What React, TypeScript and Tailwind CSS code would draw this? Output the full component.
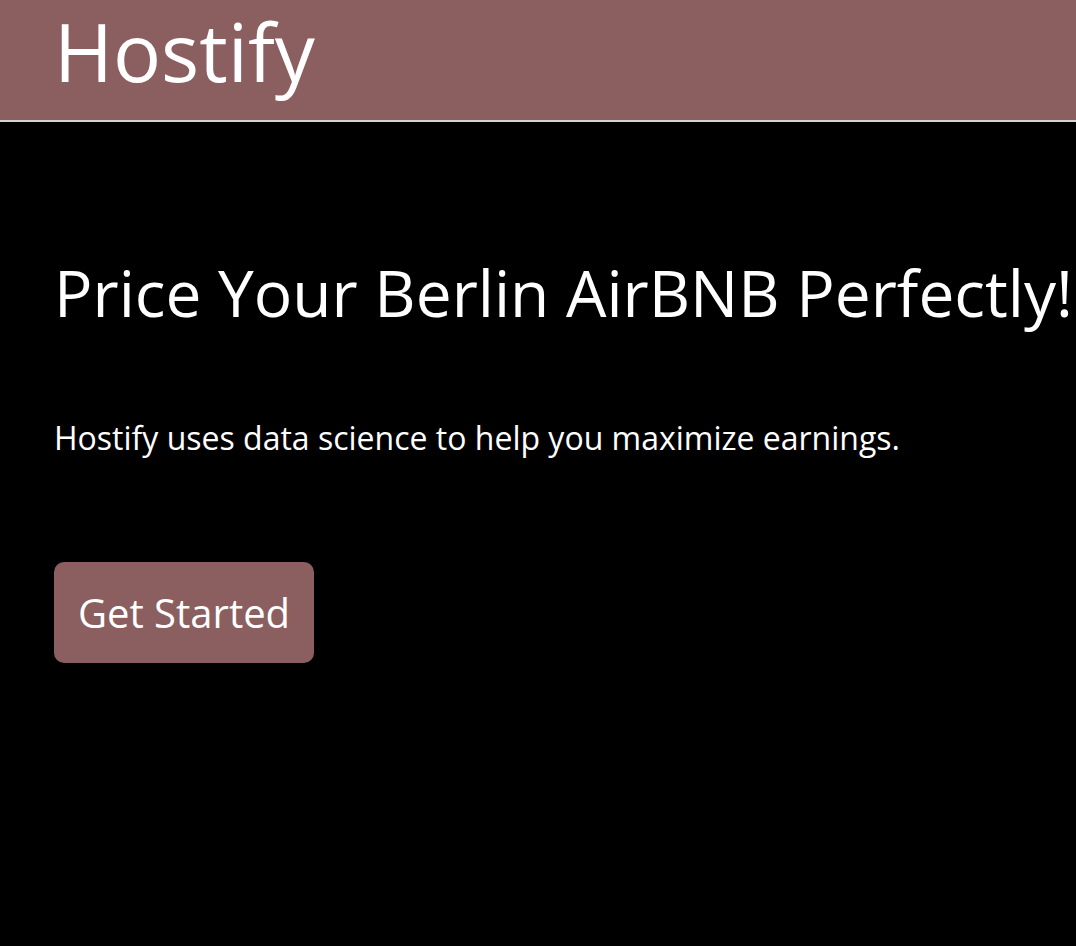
import React from 'react';

export default function App() {
  return (
    <div className="min-h-[946px] bg-black text-white font-['Open_Sans',sans-serif]">
      <header className="h-[122px] bg-[#8b5e60] border-b-2 border-[#d4d4d4] px-[54px] pt-[3px]">
        <h1 className="text-[80px] leading-[96px] font-normal">Hostify</h1>
      </header>

      <main className="px-[54px]">
        <h2 className="mt-[139px] text-[64px] leading-none whitespace-nowrap">
          Price Your Berlin AirBNB Perfectly!
        </h2>
        <p className="mt-[97px] text-[32px] leading-none">
          Hostify uses data science to help you maximize earnings.
        </p>
        <button
          type="button"
          className="mt-[108px] h-[101px] w-[260px] rounded-[10px] bg-[#8b5e60] text-[40px] leading-none text-white flex items-center justify-center"
        >
          Get Started
        </button>
      </main>
    </div>
  );
}
